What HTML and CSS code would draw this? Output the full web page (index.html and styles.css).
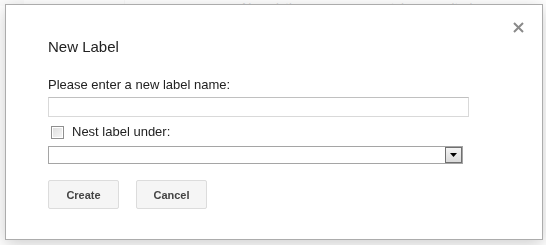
FILE: index.html
```html
<!DOCTYPE html>
<html lang="en">
<head>
    <meta charset="UTF-8">
    <title>New Label</title>
    <link rel="stylesheet" href="styles.css">
</head>
<body>
    <div class="page">
        <div class="page-top">
            <div class="side-tab"></div>
            <div class="page-rule"></div>
            <p class="empty-note">No existing messages match your criteria</p>
        </div>
    </div>

    <div class="overlay"></div>

    <div class="dialog" role="dialog">
        <button class="close" type="button" aria-label="Close">
            <svg width="11" height="11" viewBox="0 0 11 11">
                <path d="M1 1 L10 10 M10 1 L1 10" stroke="#8a8a8a" stroke-width="2"/>
            </svg>
        </button>

        <h2 class="dialog-title">New Label</h2>

        <form class="label-form">
            <label class="field-label" for="label-name">Please enter a new label name:</label>
            <input class="text-input" type="text" id="label-name">

            <label class="nest-row">
                <span class="check"></span>
                <span>Nest label under:</span>
            </label>

            <div class="select-box">
                <span class="select-value"></span>
                <span class="select-arrow">
                    <svg width="7" height="4" viewBox="0 0 7 4"><path d="M0 0 H7 L3.5 4 Z" fill="#000"/></svg>
                </span>
            </div>

            <div class="actions">
                <button type="button" class="btn">Create</button>
                <button type="button" class="btn">Cancel</button>
            </div>
        </form>
    </div>
</body>
</html>
```

FILE: styles.css
```css
body {
    margin: 0;
    font-family: Arial, "Liberation Sans", sans-serif;
    background: #fff;
    color: #222;
    overflow: hidden;
}

.page {
    height: 245px;
}

.page-top {
    position: relative;
    height: 40px;
}

.side-tab {
    width: 24px;
    height: 6px;
    background: #eeeeee;
}

.page-rule {
    position: absolute;
    left: 124px;
    top: 0;
    width: 1px;
    height: 30px;
    background: #e5e5e5;
}

.empty-note {
    position: absolute;
    left: 242px;
    top: 0;
    margin: 0;
    font-size: 13px;
    line-height: 15px;
    color: #777;
}

.overlay {
    position: fixed;
    inset: 0;
    background: rgba(255, 255, 255, 0.75);
}

.dialog {
    position: absolute;
    left: 5px;
    top: 4px;
    width: 494px;
    height: 202px;
    padding: 32px 0 0 42px;
    background: #fff;
    border: 1px solid #acacac;
    box-shadow: 0 4px 16px rgba(0, 0, 0, 0.2);
}

.close {
    position: absolute;
    right: 18px;
    top: 17px;
    width: 11px;
    height: 11px;
    padding: 0;
    border: none;
    background: none;
    display: flex;
}

.dialog-title {
    margin: 0;
    font-size: 15px;
    font-weight: normal;
    line-height: 20px;
    color: #222;
}

.label-form {
    display: flex;
    flex-direction: column;
    align-items: flex-start;
    font-size: 13px;
    color: #222;
}

.field-label {
    margin-top: 20px;
    line-height: 16px;
}

.text-input {
    box-sizing: border-box;
    margin: 4px 0 0;
    width: 421px;
    height: 20px;
    padding: 0 4px;
    border: 1px solid #d9d9d9;
    border-top-color: #c0c0c0;
    font: inherit;
}

.nest-row {
    display: flex;
    align-items: center;
    gap: 8px;
    margin-top: 7px;
    padding-left: 3px;
    line-height: 16px;
}

.check {
    box-sizing: border-box;
    width: 13px;
    height: 13px;
    border: 1px solid #8f8f8f;
    background: linear-gradient(135deg, #dcdcdc, #f7f7f7);
    box-shadow: inset 0 0 0 1px #fff;
}

.select-box {
    box-sizing: border-box;
    display: flex;
    justify-content: space-between;
    margin-top: 6px;
    width: 415px;
    height: 18px;
    border: 1px solid #a5a5a5;
    background: #fff;
}

.select-arrow {
    box-sizing: border-box;
    width: 17px;
    height: 16px;
    display: flex;
    align-items: center;
    justify-content: center;
    border: 1px solid #707070;
    background: linear-gradient(#f4f4f4, #dadada);
}

.actions {
    display: flex;
    gap: 17px;
    margin-top: 16px;
}

.btn {
    box-sizing: border-box;
    width: 71px;
    height: 29px;
    padding: 0;
    border: 1px solid #dcdcdc;
    border-radius: 2px;
    background: #f5f5f5;
    color: #444;
    font: bold 11px Arial, "Liberation Sans", sans-serif;
}
```
